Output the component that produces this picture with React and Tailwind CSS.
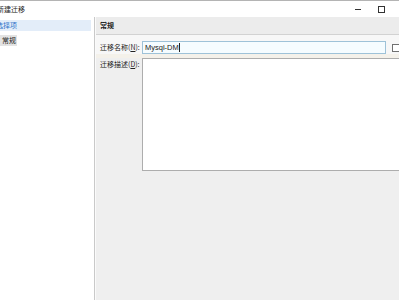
export default function App() {
  const font = "font-['Noto_Sans_CJK_SC','Liberation_Sans',sans-serif]";
  return (
    <div className={`w-[399px] h-[300px] overflow-hidden bg-white flex flex-col text-[7px] leading-[9px] text-[#222] ${font}`}>
      {/* Title bar */}
      <div className="h-[17px] shrink-0 border-t border-[#b4b4b4] bg-white flex items-center">
        <span className="ml-[-3px]">新建迁移</span>
        <div className="ml-auto flex items-center">
          <div className="w-[6px] h-[1px] bg-[#333] mr-[17px]" />
          <div className="w-[7px] h-[7px] border border-[#333] mr-[14px]" />
        </div>
      </div>
      {/* Body */}
      <div className="flex-1 flex min-h-0">
        {/* Left tree */}
        <div className="w-[95px] shrink-0 bg-white border-r border-[#c9c9c9] pt-[3px]">
          <div className="w-[91px] h-[11px] bg-[#e3edf9] flex items-center">
            <span className="ml-[-4px] text-[#2f73c9]">选择项</span>
          </div>
          <div className="mt-[4px] w-[17px] h-[11px] bg-[#e3e3e3] flex items-center">
            <span className="ml-[2px]">常规</span>
          </div>
        </div>
        {/* Right panel */}
        <div className="flex-1 min-w-0 bg-[#efefef] border-l border-[#fafafa] flex flex-col overflow-hidden">
          <div className="h-[18px] shrink-0 border-b border-[#d2d2d2] bg-[#ececec] flex items-center pl-[4px]">
            <span className="font-semibold">常规</span>
          </div>
          <div className="bg-[#f7f7f7] pt-[6px]">
            <div className="flex items-center">
              <div className="w-[46px] shrink-0 pl-[4px] whitespace-nowrap">
                迁移名称(<span className="underline">N</span>):
              </div>
              <div className="w-[244px] h-[13px] shrink-0 border border-[#9ec2d8] bg-[#f5fcff] flex items-center pl-[2px]">
                <span className="font-['Liberation_Sans',sans-serif] text-[7.5px]">Mysql-DM</span>
                <span className="w-[1px] h-[9px] bg-[#222] ml-[0.5px]" />
              </div>
              <div className="ml-[6px] w-[8px] h-[8px] shrink-0 border border-[#707070] bg-white" />
            </div>
            <div className="h-[4px] bg-[#f4f1ea]" />
          </div>
          <div className="flex items-start">
            <div className="w-[46px] shrink-0 pl-[4px] pt-[2px] whitespace-nowrap">
              迁移描述(<span className="underline">D</span>):
            </div>
            <div className="w-[270px] h-[113px] shrink-0 border border-r-0 border-[#adadad] bg-white" />
          </div>
        </div>
      </div>
    </div>
  );
}
